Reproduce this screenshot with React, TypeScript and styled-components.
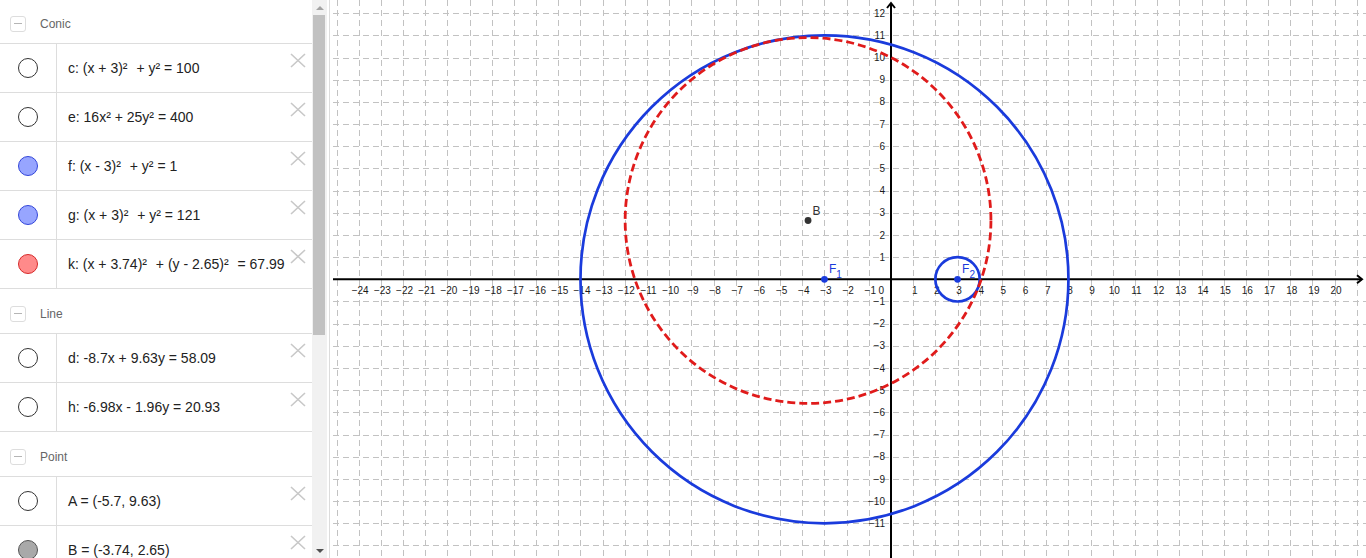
import React from "react";
import styled, { createGlobalStyle } from "styled-components";

const GlobalStyle = createGlobalStyle`
  html, body {
    margin: 0;
    padding: 0;
    overflow: hidden;
    background: #ffffff;
  }
  body {
    font-family: "Liberation Sans", Arial, sans-serif;
  }
`;

type MarkerKind = "off" | "blue" | "red" | "gray";

interface AlgebraItem {
  id: string;
  text: string;
  marker: MarkerKind;
}

interface AlgebraGroup {
  title: string;
  items: AlgebraItem[];
}

const groups: AlgebraGroup[] = [
  {
    title: "Conic",
    items: [
      { id: "c", text: "c: (x + 3)² + y² = 100", marker: "off" },
      { id: "e", text: "e: 16x² + 25y² = 400", marker: "off" },
      { id: "f", text: "f: (x - 3)² + y² = 1", marker: "blue" },
      { id: "g", text: "g: (x + 3)² + y² = 121", marker: "blue" },
      { id: "k", text: "k: (x + 3.74)² + (y - 2.65)² = 67.99", marker: "red" },
    ],
  },
  {
    title: "Line",
    items: [
      { id: "d", text: "d: -8.7x + 9.63y = 58.09", marker: "off" },
      { id: "h", text: "h: -6.98x - 1.96y = 20.93", marker: "off" },
    ],
  },
  {
    title: "Point",
    items: [
      { id: "A", text: "A = (-5.7, 9.63)", marker: "off" },
      { id: "B", text: "B = (-3.74, 2.65)", marker: "gray" },
    ],
  },
];

const markerColors: Record<MarkerKind, { fill: string; border: string }> = {
  off: { fill: "#ffffff", border: "#333333" },
  blue: { fill: "#97a5ff", border: "#3346d9" },
  red: { fill: "#ff8a8a", border: "#d62a2a" },
  gray: { fill: "#a9a9a9", border: "#555555" },
};

// graphics view coordinates
const W = 1033;
const H = 558;
const U = 22.18;
const OX = 558;
const OY = 279.3;
const toX = (x: number) => OX + x * U;
const toY = (y: number) => OY - y * U;

const BLUE = "#1a3bdc";
const RED = "#e01b1b";

const Page = styled.div`
  display: flex;
  width: 1366px;
  height: 558px;
  overflow: hidden;
`;

const AlgebraPanel = styled.div`
  display: flex;
  height: 100%;
  flex-shrink: 0;
`;

const ListArea = styled.div`
  width: 312px;
  height: 100%;
  overflow: hidden;
`;

const ListInner = styled.div`
  margin-top: -1px;
`;

const GroupHeader = styled.div`
  display: flex;
  align-items: center;
  gap: 14px;
  height: 45px;
  box-sizing: border-box;
  padding: 5px 0 0 10px;
  border-bottom: 1px solid #dddddd;
  color: #666666;
  font-size: 12px;
`;

const ToggleBox = styled.div`
  width: 16px;
  height: 16px;
  box-sizing: border-box;
  border: 1px solid #dddddd;
  border-radius: 3px;
  display: flex;
  align-items: center;
  justify-content: center;

  &::after {
    content: "";
    width: 8px;
    height: 1px;
    background: #b5b5b5;
  }
`;

const ItemRow = styled.div`
  display: flex;
  height: 48px;
  border-bottom: 1px solid #dddddd;
`;

const MarkerCell = styled.div`
  width: 57px;
  box-sizing: border-box;
  border-right: 1px solid #dddddd;
  display: flex;
  align-items: center;
  justify-content: center;
  flex-shrink: 0;
`;

const Marker = styled.div<{ $kind: MarkerKind }>`
  width: 20px;
  height: 20px;
  box-sizing: border-box;
  border-radius: 50%;
  background: ${(p) => markerColors[p.$kind].fill};
  border: 1px solid ${(p) => markerColors[p.$kind].border};
`;

const ItemText = styled.div`
  flex: 1;
  display: flex;
  align-items: center;
  padding: 0 0 1px 11px;
  font-size: 14px;
  color: #222222;
  white-space: pre;
  overflow: hidden;
`;

const ParenPower = styled.span`
  margin-right: 5px;
`;

const DeleteButton = styled.div`
  align-self: flex-start;
  margin-top: 9px;
  margin-right: 6px;
  width: 16px;
  height: 15px;
  flex-shrink: 0;
`;

const ScrollTrack = styled.div`
  width: 15px;
  height: 100%;
  background: #f1f1f1;
  display: flex;
  flex-direction: column;
`;

const ScrollArrow = styled.div<{ $dir: "up" | "down" }>`
  height: 15px;
  display: flex;
  align-items: center;
  justify-content: center;

  &::after {
    content: "";
    border-left: 4px solid transparent;
    border-right: 4px solid transparent;
    ${(p) =>
      p.$dir === "up"
        ? "border-bottom: 4px solid #a3a3a3;"
        : "border-top: 4px solid #505050;"}
  }
`;

const ScrollThumb = styled.div`
  width: 12px;
  height: 320px;
  margin-left: 1px;
  background: #c1c1c1;
`;

const ScrollSpacer = styled.div`
  flex: 1;
`;

const Splitter = styled.div`
  width: 6px;
  height: 100%;
  flex-shrink: 0;
  box-sizing: border-box;
  background: #ffffff;
  border-left: 2px solid #ffffff;

  &::before {
    content: "";
    display: block;
    width: 1px;
    height: 100%;
    background: #dcdcdc;
  }
`;

const GraphicsView = styled.div`
  flex: 1;
  height: 100%;
  background: #ffffff;
`;

const AxisLabel = styled.text`
  font-family: "Liberation Sans", Arial, sans-serif;
  font-size: 10px;
  fill: #1a1a1a;
`;

const PointLabel = styled.text<{ $color: string }>`
  font-family: "Liberation Sans", Arial, sans-serif;
  font-size: 12px;
  fill: ${(p) => p.$color};
`;

const fmt = (n: number) => (n < 0 ? `\u2212${-n}` : `${n}`);

// GeoGebra leaves a wider gap after a squared bracket
const renderFormula = (text: string) => {
  const parts = text.split(")²");
  return parts.map((part, i) => (
    <React.Fragment key={i}>
      {part}
      {i < parts.length - 1 && <ParenPower>)²</ParenPower>}
    </React.Fragment>
  ));
};

const DeleteIcon = () => (
  <svg width="16" height="15" viewBox="0 0 16 15">
    <path d="M1 1 L15 14 M15 1 L1 14" stroke="#c8c8c8" strokeWidth="1.6" fill="none" />
  </svg>
);

const Graph: React.FC = () => {
  const vLines: number[] = [];
  for (let k = -26; k <= 22; k++) {
    const x = Math.round(toX(k)) + 0.5;
    if (k !== 0 && x > 0 && x < W) vLines.push(x);
  }
  const hLines: number[] = [];
  for (let k = -13; k <= 13; k++) {
    const y = Math.round(toY(k)) + 0.5;
    if (k !== 0 && y > 0 && y < H) hLines.push(y);
  }
  const xLabels: number[] = [];
  for (let k = -24; k <= 20; k++) if (k !== 0) xLabels.push(k);
  const yLabels: number[] = [];
  for (let k = -11; k <= 12; k++) if (k !== 0) yLabels.push(k);

  const ax = Math.round(OX);
  const ay = OY;

  return (
    <svg width={W} height={H} viewBox={`0 0 ${W} ${H}`} style={{ display: "block" }}>
      <g stroke="#c2c2c2" strokeWidth="1" strokeDasharray="6 4">
        {vLines.map((x) => (
          <line key={`v${x}`} x1={x} y1={0} x2={x} y2={H} />
        ))}
        {hLines.map((y) => (
          <line key={`h${y}`} x1={0} y1={y} x2={W} y2={y} />
        ))}
      </g>

      <g stroke="#000" strokeWidth="2" fill="none">
        <line x1={0} y1={ay} x2={W - 4} y2={ay} />
        <path d={`M${W - 9} ${ay - 4} L${W - 4} ${ay} L${W - 9} ${ay + 4}`} />
        <line x1={ax} y1={3} x2={ax} y2={H} />
        <path d={`M${ax - 4} 8 L${ax} 3 L${ax + 4} 8`} />
      </g>

      {xLabels.map((k) => (
        <AxisLabel key={`xl${k}`} x={toX(k) + 1.5} y={294} textAnchor="middle">
          {fmt(k)}
        </AxisLabel>
      ))}
      <AxisLabel x={ax - 7} y={294} textAnchor="end">
        0
      </AxisLabel>
      {yLabels.map((k) => (
        <AxisLabel key={`yl${k}`} x={ax - 6} y={toY(k) + 3.6} textAnchor="end">
          {fmt(k)}
        </AxisLabel>
      ))}

      <circle cx={toX(-3)} cy={toY(0)} r={11 * U} fill="none" stroke={BLUE} strokeWidth="2.7" />
      <circle cx={toX(3)} cy={toY(0)} r={1 * U} fill="none" stroke={BLUE} strokeWidth="2.7" />
      <circle
        cx={toX(-3.74)}
        cy={toY(2.65)}
        r={Math.sqrt(67.99) * U}
        fill="none"
        stroke={RED}
        strokeWidth="2.8"
        strokeDasharray="8 4"
      />

      <circle cx={toX(-3.74)} cy={toY(2.65)} r={3.4} fill="#333" />
      <PointLabel $color="#333" x={toX(-3.74) + 4.5} y={toY(2.65) - 5.5} fontSize="11">
        B
      </PointLabel>

      {[-3, 3].map((px, i) => (
        <g key={`F${i}`}>
          <circle cx={toX(px)} cy={toY(0)} r={3.4} fill={BLUE} />
          <PointLabel $color={BLUE} x={toX(px) + 4.5} y={toY(0) - 6}>
            F
            <tspan fontSize="10" dy="5">
              {i + 1}
            </tspan>
          </PointLabel>
        </g>
      ))}
    </svg>
  );
};

const App: React.FC = () => {
  return (
    <>
      <GlobalStyle />
      <Page>
        <AlgebraPanel>
          <ListArea>
            <ListInner>
              {groups.map((group) => (
                <React.Fragment key={group.title}>
                  <GroupHeader>
                    <ToggleBox />
                    {group.title}
                  </GroupHeader>
                  {group.items.map((item) => (
                    <ItemRow key={item.id}>
                      <MarkerCell>
                        <Marker $kind={item.marker} />
                      </MarkerCell>
                      <ItemText>{renderFormula(item.text)}</ItemText>
                      <DeleteButton>
                        <DeleteIcon />
                      </DeleteButton>
                    </ItemRow>
                  ))}
                </React.Fragment>
              ))}
            </ListInner>
          </ListArea>
          <ScrollTrack>
            <ScrollArrow $dir="up" />
            <ScrollThumb />
            <ScrollSpacer />
            <ScrollArrow $dir="down" />
          </ScrollTrack>
        </AlgebraPanel>
        <Splitter />
        <GraphicsView>
          <Graph />
        </GraphicsView>
      </Page>
    </>
  );
};

export default App;
